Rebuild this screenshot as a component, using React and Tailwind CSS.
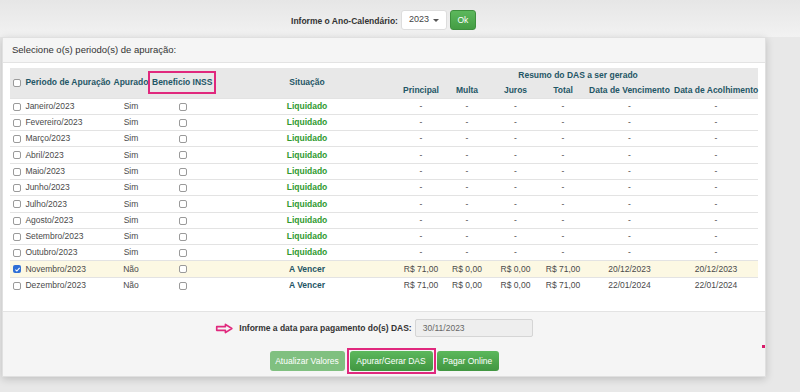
import React from 'react';

const meses = [
  'Janeiro', 'Fevereiro', 'Março', 'Abril', 'Maio', 'Junho',
  'Julho', 'Agosto', 'Setembro', 'Outubro',
];

const Box = ({ checked }) =>
  checked ? (
    <span className="inline-flex w-[8px] h-[8px] rounded-[2px] bg-[#2f6fd6] items-center justify-center align-middle">
      <svg viewBox="0 0 10 10" className="w-[7px] h-[7px]">
        <path d="M2 5.2 L4.1 7.2 L8 2.8" fill="none" stroke="white" strokeWidth="1.6" />
      </svg>
    </span>
  ) : (
    <span className="inline-block w-[8px] h-[8px] rounded-[2px] border border-[#9a9a9a] bg-white align-middle" />
  );

const th = 'font-bold text-[#1f5666] text-center';

const Row = ({ nome, ap, sit, vencer, valores, checked, hl }) => (
  <tr className={`h-[16.3px] border-t border-[#e3e3e3] ${hl ? 'bg-[#fcf8e3]' : ''}`}>
    <td className="pl-[3px] whitespace-nowrap">
      <Box checked={checked} /> <span className="ml-[2px]">{nome}</span>
    </td>
    <td className="text-center">{ap}</td>
    <td className="text-center"><Box /></td>
    <td className={`text-center font-bold ${vencer ? 'text-[#1f5666]' : 'text-[#2f9a2f]'}`}>{sit}</td>
    {valores.map((v, i) => (
      <td key={i} className="text-center">{v}</td>
    ))}
  </tr>
);

const App = () => {
  const traco = ['-', '-', '-', '-', '-', '-'];
  return (
    <div className="w-[800px] h-[392px] overflow-hidden bg-[#e8e8e8] font-['Liberation_Sans',Arial,sans-serif] text-[#4a4a4a] relative">
      {/* topo */}
      <div className="h-[37px] flex items-start justify-center pt-[10px] pr-[33px] bg-gradient-to-b from-[#e6e6e6] to-[#f2f2f2]">
        <span className="text-[8.5px] font-bold text-[#333] mt-[5px] mr-[3px]">Informe o Ano-Calendário:</span>
        <div className="w-[46px] h-[20px] bg-white border border-[#ddd] rounded-[3px] flex items-center justify-between px-[7px] text-[9px] text-[#444]">
          2023
          <span className="w-0 h-0 border-l-[3px] border-r-[3px] border-t-[3px] border-l-transparent border-r-transparent border-t-[#555]" />
        </div>
        <button className="ml-[3px] w-[26px] h-[20px] rounded-[3px] bg-gradient-to-b from-[#5cb85c] to-[#449d44] border border-[#3e8f3e] text-white text-[8.5px]">
          Ok
        </button>
      </div>

      {/* painel */}
      <div className="ml-[2px] w-[764px] h-[340px] bg-white border border-[#e0e0e0] shadow-[0_2px_8px_rgba(0,0,0,0.18)] flex flex-col">
        <div className="h-[25px] bg-[#f5f5f5] border-b border-[#e3e3e3] px-[9px] flex items-center text-[9.5px] text-[#333]">
          Selecione o(s) periodo(s) de apuração:
        </div>
        <div className="px-[7px] pt-[5px] flex-1">
          <table className="w-[748px] table-fixed border-collapse text-[8.5px]">
            <colgroup>
              <col className="w-[102px]" />
              <col className="w-[38px]" />
              <col className="w-[66px]" />
              <col className="w-[182px]" />
              <col className="w-[46px]" />
              <col className="w-[46px]" />
              <col className="w-[51px]" />
              <col className="w-[44px]" />
              <col className="w-[89px]" />
              <col className="w-[84px]" />
            </colgroup>
            <thead className="bg-[#e8e8e8]">
              <tr className="h-[15px]">
                <th rowSpan={2} className={`${th} text-left pl-[3px] whitespace-nowrap`}>
                  <Box /> <span className="ml-[2px]">Periodo de Apuração</span>
                </th>
                <th rowSpan={2} className={th}>Apurado</th>
                <th rowSpan={2} className={th}>
                  <span className="inline-block border-2 border-[#e0287d] px-[2px] py-[3px] -ml-[2px] whitespace-nowrap">
                    Beneficio INSS
                  </span>
                </th>
                <th rowSpan={2} className={th}>Situação</th>
                <th colSpan={6} className={th}>Resumo do DAS a ser gerado</th>
              </tr>
              <tr className="h-[15px]">
                <th className={th}>Principal</th>
                <th className={th}>Multa</th>
                <th className={th}>Juros</th>
                <th className={th}>Total</th>
                <th className={`${th} whitespace-nowrap`}>Data de Vencimento</th>
                <th className={`${th} whitespace-nowrap`}>Data de Acolhimento</th>
              </tr>
            </thead>
            <tbody>
              {meses.map((m) => (
                <Row key={m} nome={`${m}/2023`} ap="Sim" sit="Liquidado" valores={traco} />
              ))}
              <Row
                nome="Novembro/2023"
                ap="Não"
                sit="A Vencer"
                vencer
                checked
                hl
                valores={['R$ 71,00', 'R$ 0,00', 'R$ 0,00', 'R$ 71,00', '20/12/2023', '20/12/2023']}
              />
              <Row
                nome="Dezembro/2023"
                ap="Não"
                sit="A Vencer"
                vencer
                valores={['R$ 71,00', 'R$ 0,00', 'R$ 0,00', 'R$ 71,00', '22/01/2024', '22/01/2024']}
              />
            </tbody>
          </table>
        </div>

        {/* rodapé */}
        <div className="h-[65px] bg-[#f5f5f5] border-t border-[#e3e3e3] flex flex-col items-center pt-[7px]">
          <div className="flex items-center pr-[20px]">
            <svg viewBox="0 0 20 12" className="w-[19px] h-[11px] mr-[5px]">
              <path d="M1.5 4 H11 V1.5 L18 6 L11 10.5 V8 H1.5 Z" fill="none" stroke="#e0287d" strokeWidth="1.8" strokeLinejoin="round" />
            </svg>
            <span className="text-[8.5px] font-bold text-[#333]">Informe a data para pagamento do(s) DAS:</span>
            <div className="ml-[3px] w-[118px] h-[18px] bg-[#eeeeee] border border-[#d5d5d5] rounded-[2px] text-[8.5px] text-[#666] flex items-center px-[7px]">
              30/11/2023
            </div>
          </div>
          <div className="flex items-center mt-[11px]">
            <button className="w-[75px] h-[20px] rounded-[3px] bg-[#80c080] text-white text-[8.5px]">
              Atualizar Valores
            </button>
            <div className="ml-[2px] border-2 border-[#e0287d] p-[1px]">
              <button className="w-[83px] h-[20px] rounded-[3px] bg-gradient-to-b from-[#5cb85c] to-[#419641] text-white text-[8.5px] block">
                Apurar/Gerar DAS
              </button>
            </div>
            <button className="ml-[1px] w-[62px] h-[20px] rounded-[3px] bg-gradient-to-b from-[#5cb85c] to-[#419641] text-white text-[8.5px]">
              Pagar Online
            </button>
          </div>
        </div>
      </div>
      <span className="absolute left-[762px] top-[345px] w-[3px] h-[3px] bg-[#d81b6a]" />
    </div>
  );
};

export default App;
